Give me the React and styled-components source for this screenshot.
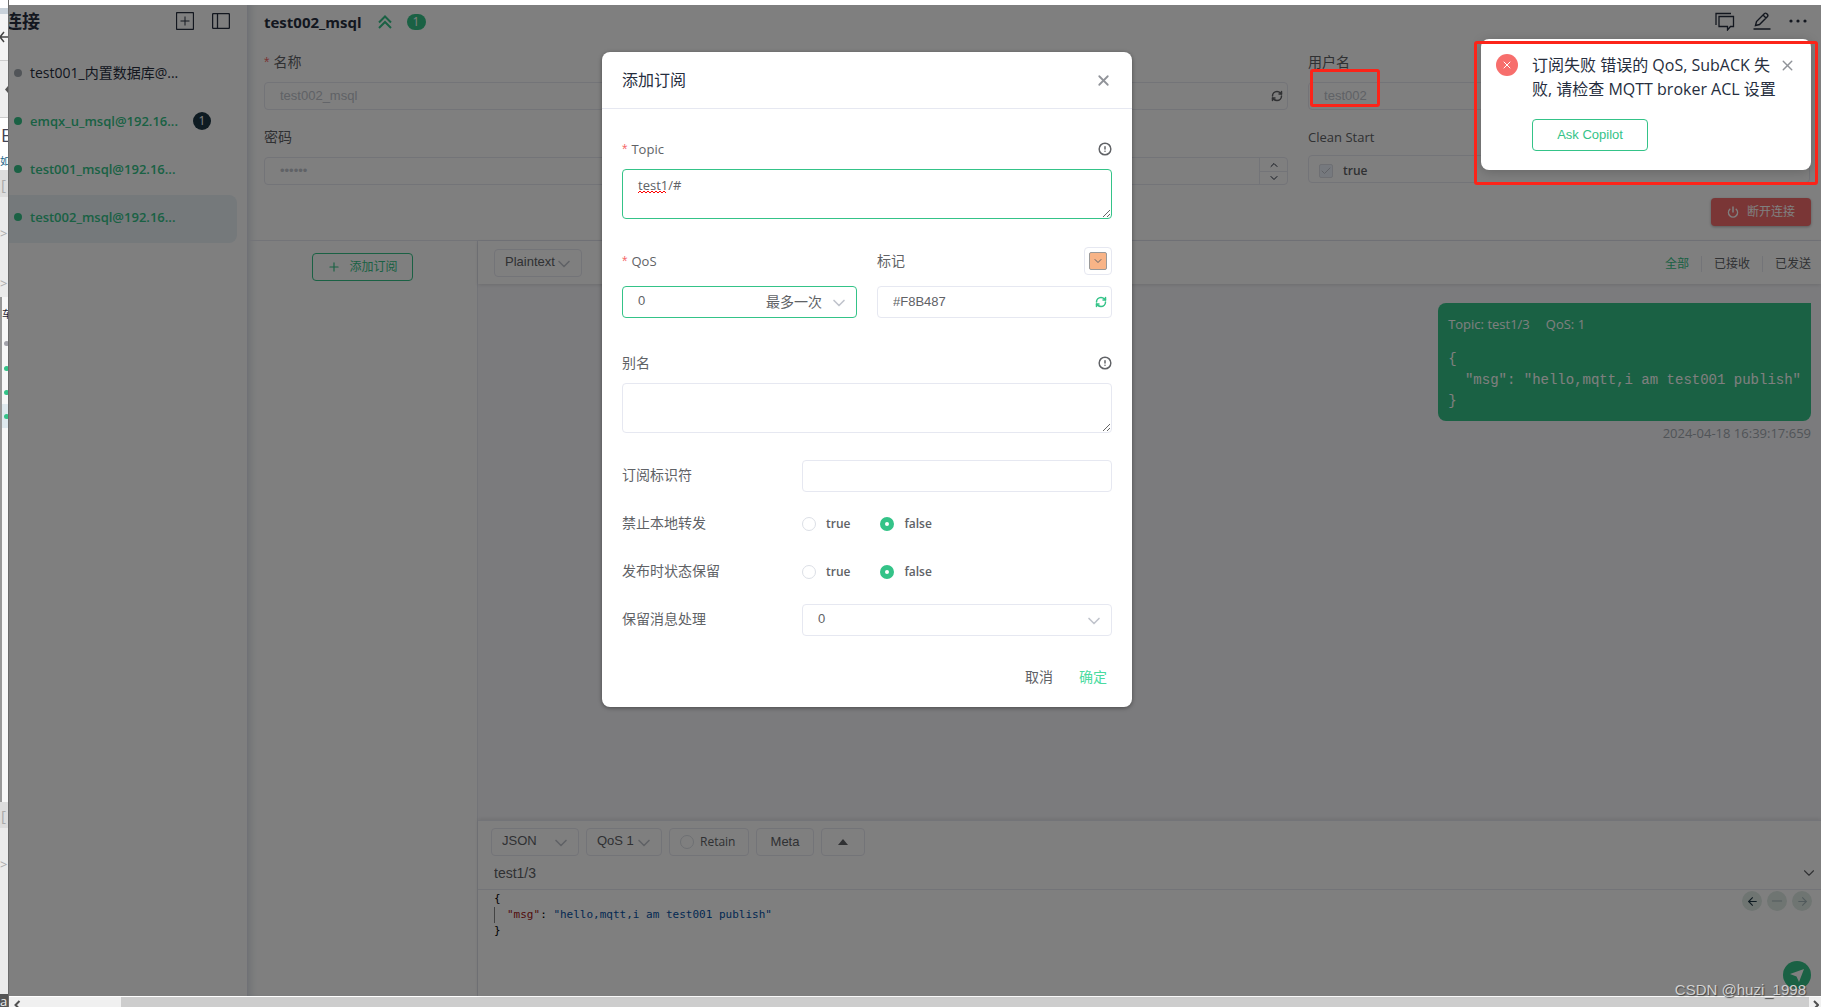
import styled, { createGlobalStyle, css } from "styled-components"
import {
  ArrowLeft,
  ArrowRight,
  Check,
  ChevronDown,
  ChevronUp,
  CircleAlert,
  Minus,
  Plus,
  Power,
  RefreshCw,
  X,
} from "lucide-react"

const green = "#34c388"
const red = "#f56c6c"
const line = "#e6e8f1"
const text = "#606266"
const title = "#262e3e"
const ui = `"Open Sans", "Noto Sans CJK SC", sans-serif`
const arial = `"Liberation Sans", "Noto Sans CJK SC", sans-serif`

const GlobalStyle = createGlobalStyle`
  *, *::before, *::after { box-sizing: border-box; }
  body {
    margin: 0;
    overflow: hidden;
    background: #fff;
    color: ${text};
    font: 13px/20px ${ui};
  }
  button, input, select, textarea {
    margin: 0;
    padding: 0;
    font: inherit;
    color: inherit;
    background: none;
    border: 0;
    outline: none;
  }
  svg { display: block; flex: none; }
`

const Screen = styled.div`
  display: flex;
  height: 100vh;
`

/* windows that peek out on the left */
const Strip = styled.div`
  flex: 0 0 9px;
  display: flex;
  flex-direction: column;
  overflow: hidden;
  border-right: 1px solid #6b6b6b;
  background: #ebebeb;
`

const Slice = styled.div`
  flex: ${p => (p.$h ? `0 0 ${p.$h}px` : "1 1 0")};
  display: flex;
  align-items: center;
  padding-left: ${p => p.$pad || 0}px;
  overflow: hidden;
  white-space: nowrap;
  background: ${p => p.$bg || "#ebebeb"};
  color: ${p => p.$color || "#aaa"};
  font-size: ${p => p.$size || 13}px;
  border-left: ${p => (p.$edge ? "2px solid #999" : 0)};
  border-bottom: ${p => (p.$rule ? "1px solid #ccc" : 0)};
`

const MiniDot = styled.i`
  flex: none;
  width: 5px;
  height: 5px;
  border-radius: 50%;
  background: ${p => p.$color || green};
`

const Desktop = styled.div`
  flex: 1;
  min-width: 0;
  display: flex;
  flex-direction: column;
  padding-top: 5px;
`

const Window = styled.div`
  position: relative;
  flex: 1;
  min-height: 0;
  display: flex;
  background: #fff;
`

const Mask = styled.div`
  position: absolute;
  inset: 0;
  z-index: 5;
  display: flex;
  align-items: flex-start;
  justify-content: center;
  padding: 47px 96px 0 0;
  background: rgba(0, 0, 0, 0.5);
`

const ScrollBar = styled.div`
  flex: 0 0 11px;
  display: flex;
  align-items: center;
  border-top: 1px solid #fff;
  background: #f0f0f0;
  color: #505050;
  overflow: hidden;
`

const ScrollArrow = styled.div`
  flex: none;
  padding: 6px 2px 0 4px;
`

const ScrollThumb = styled.div`
  flex: 1;
  height: 10px;
  margin-left: 98px;
  background: #cdcdcd;
`

/* sidebar */
const Sidebar = styled.aside`
  flex: 0 0 238px;
  display: flex;
  flex-direction: column;
  overflow: hidden;
`

const SideHead = styled.header`
  display: flex;
  align-items: center;
  gap: 18px;
  height: 46px;
  padding: 0 17px 14px 0;
  color: ${title};
`

const SideTitle = styled.h2`
  flex: 1;
  margin: 0 0 0 -5px;
  font: 700 18px/24px ${ui};
`

const IconButton = styled.button`
  display: flex;
  align-items: center;
  justify-content: center;
  color: ${p => p.$color || title};
`

const ConnList = styled.ul`
  margin: 0;
  padding: 0 10px 0 0;
  list-style: none;
`

const Conn = styled.li`
  display: flex;
  align-items: center;
  height: 48px;
  padding: 0 0 4px 5px;
  border-radius: 0 8px 8px 0;
  color: ${p => (p.$off ? title : green)};
  background: ${p => (p.$active ? "#eaf2f7" : "none")};
  font-weight: ${p => (p.$off ? 400 : 600)};
  font-size: ${p => (p.$off ? 14 : 13)}px;
`

const Dot = styled.i`
  flex: none;
  width: 8px;
  height: 8px;
  margin-right: 8px;
  border-radius: 50%;
  background: ${p => (p.$off ? "#a2a9b0" : green)};
`

const Count = styled.span`
  width: ${p => p.$w || 18}px;
  height: ${p => p.$h || 18}px;
  margin-left: 15px;
  border-radius: 9px;
  background: ${p => p.$bg};
  color: #fff;
  font: 400 12px/18px ${ui};
  line-height: ${p => p.$h || 18}px;
  text-align: center;
`

/* main */
const Main = styled.main`
  flex: 1;
  min-width: 0;
  display: flex;
  flex-direction: column;
  border-left: 1px solid #e0e2ec;
  box-shadow: inset 8px 0 8px -6px #d5dce3;
`

const TopBar = styled.header`
  display: flex;
  align-items: center;
  height: 34px;
  padding: 0 14px 0 16px;
`

const ConnTitle = styled.h1`
  margin: 0 16px 0 0;
  color: ${title};
  font: 700 15px/24px ${ui};
`

const Tools = styled.div`
  display: flex;
  align-items: center;
  gap: 18px;
  margin: 0 0 2px auto;
`

const ConnForm = styled.form`
  display: flex;
  flex-wrap: wrap;
  align-content: flex-start;
  padding: 8px 1px 0 6px;
  height: 159px;
`

const Col = styled.div`
  flex: 0 0 ${p => p.$w};
  height: 75px;
  padding: 0 10px;
`

const FieldLabel = styled.label`
  display: flex;
  align-items: center;
  gap: 4px;
  height: 30px;
  font-size: ${p => p.$size || 14}px;
  color: ${text};
`

const Star = styled.span`
  color: ${red};
  font: 14px/20px ${arial};
`

const Field = styled.div`
  position: relative;
  display: flex;
  align-items: center;
  height: ${p => p.$h || 28}px;
  margin-top: ${p => p.$mt || 0}px;
  padding: 0 ${p => p.$pr || 0}px 0 ${p => p.$pl || 15}px;
  border: 1px solid ${p => (p.$focus ? green : line)};
  border-radius: 4px;
  font-family: ${arial};

  input[type="text"], input[type="password"] {
    flex: 1;
    min-width: 0;
    color: ${p => (p.$muted ? "#c0c4cc" : text)};
  }
`

const Spinner = styled.div`
  align-self: stretch;
  display: grid;
  grid-template-rows: 1fr 1fr;
  width: 28px;
  border-left: 1px solid ${line};

  button + button { border-top: 1px solid ${line}; }
`

const CheckLine = styled.label`
  display: flex;
  align-items: center;
  gap: 10px;
  padding-top: 3px;
  font: 600 12px/20px ${ui};
  svg { grid-area: 1 / 1; }
`

const CheckBox = styled.span`
  display: grid;
  place-items: center;
  color: #c0c4cc;

  input {
    grid-area: 1 / 1;
    appearance: none;
    width: 14px;
    height: 14px;
    border: 1px solid #dcdfe6;
    border-radius: 2px;
    background: #edf2fc;
  }
`

const ActionRow = styled.div`
  display: flex;
  justify-content: flex-end;
  height: 43px;
  padding-right: 10px;
  border-bottom: 1px solid ${line};
`

const DisconnectButton = styled.button`
  display: flex;
  align-items: center;
  justify-content: center;
  gap: 8px;
  width: 100px;
  height: 28px;
  border-radius: 4px;
  background: ${red};
  color: #fff;
  font-size: 12px;
  box-shadow: 0 1px 3px rgba(0, 0, 0, 0.3);
`

const Body = styled.div`
  flex: 1;
  min-height: 0;
  display: flex;
`

const Subs = styled.section`
  flex: 0 0 230px;
  border-right: 1px solid ${line};
  padding-top: 12px;
`

const AddButton = styled.button`
  display: flex;
  align-items: center;
  justify-content: center;
  gap: 8px;
  width: 101px;
  height: 28px;
  margin: 0 auto;
  border: 1px solid ${green};
  border-radius: 4px;
  color: ${green};
  font-size: 12px;
`

const Chat = styled.section`
  flex: 1;
  min-width: 0;
  display: flex;
  flex-direction: column;
`

const ChatHead = styled.div`
  display: flex;
  align-items: center;
  justify-content: space-between;
  height: 43px;
  padding: 0 10px 0 16px;
  z-index: 1;
  box-shadow: 0 1px 4px rgba(0, 0, 0, 0.12);
`

const SelectWrap = styled.div`
  display: grid;
  align-items: center;
  width: ${p => p.$w || "100%"};
  height: ${p => p.$h || 28}px;
  margin-top: ${p => p.$mt || 0}px;
  border: 1px solid ${p => (p.$focus ? green : line)};
  border-radius: 4px;
  color: ${text};
  font-family: ${arial};

  select {
    grid-area: 1 / 1;
    appearance: none;
    height: 100%;
    padding: 0 0 2px ${p => p.$pl || 10}px;
  }
`

const SelectTail = styled.span`
  grid-area: 1 / 1;
  justify-self: end;
  display: flex;
  align-items: center;
  gap: 7px;
  padding-right: 7px;
  font-size: 14px;
  pointer-events: none;
  svg { margin-top: 2px; color: #c0c4cc; }
`

const Filters = styled.nav`
  display: flex;
  align-items: center;
  padding-top: 2px;
  font-size: 12px;
`

const FilterLink = styled.a`
  padding: 0 12px;
  border-left: ${p => (p.$first ? 0 : `1px solid ${line}`)};
  color: ${p => (p.$active ? green : text)};
  line-height: 16px;
  text-decoration: none;
  &:last-child { padding-right: 0; }
`

const Messages = styled.div`
  flex: 1;
  min-height: 0;
  display: flex;
  flex-direction: column;
  align-items: flex-end;
  padding: 19px 10px 0;
  background: #f7f7fb;
`

const Bubble = styled.article`
  padding: 11px 10px 9px;
  border-radius: 8px 0 8px 8px;
  background: ${green};
  color: #fff;
`

const BubbleMeta = styled.p`
  display: flex;
  gap: 16px;
  margin: 0 0 15px;
`

const Payload = styled.pre`
  margin: 0;
  font: 14px/21px "Liberation Mono", monospace;
`

const Time = styled.time`
  padding-top: 2px;
  color: #a2a9b0;
  font-size: 13px;
`

const Composer = styled.div`
  flex: 0 0 176px;
  border-top: 1px solid ${line};
  box-shadow: 0 -1px 4px rgba(0, 0, 0, 0.1);
  background: #fff;
`

const ComposerBar = styled.div`
  display: flex;
  gap: 7px;
  padding: 7px 13px 0;
`

const BarBox = styled.label`
  display: flex;
  align-items: center;
  gap: 6px;
  width: 80px;
  height: 28px;
  padding-left: 10px;
  border: 1px solid ${line};
  border-radius: 4px;
  font-size: 12px;
`

const BarButton = styled.button`
  display: flex;
  align-items: center;
  justify-content: center;
  width: ${p => p.$w}px;
  height: 28px;
  border: 1px solid ${line};
  border-radius: 4px;
  font: 13px/20px ${arial};
`

const TopicLine = styled.div`
  display: flex;
  align-items: center;
  height: 34px;
  padding: 0 3px 0 16px;
  border-bottom: 1px solid ${line};

  input {
    flex: 1;
    font: 14px/20px ${arial};
  }
`

const EditorArea = styled.div`
  display: flex;
  justify-content: space-between;
  padding: 1px 9px 0 16px;
`

const Code = styled.pre`
  margin: 0;
  color: #000;
  font: 11px/16px "DejaVu Sans Mono", monospace;
`

const CodeIndent = styled.span`
  display: inline-block;
  width: 13px;
  height: 16px;
  border-left: 1px solid #888;
  vertical-align: top;
`

const Key = styled.span`
  color: #a31515;
`

const Str = styled.span`
  color: #0451a5;
`

const History = styled.div`
  display: flex;
  align-items: flex-start;
  gap: 5px;
`

const RoundButton = styled.button`
  display: grid;
  place-items: center;
  width: ${p => p.$size || 20}px;
  height: ${p => p.$size || 20}px;
  border-radius: 50%;
  background: ${p => (p.$primary ? green : "#dfeae5")};
  color: ${p => (p.$primary ? "#fff" : p.$off ? "#a2b5b8" : "#1d3644")};
`

const SendRow = styled.div`
  display: flex;
  justify-content: flex-end;
  padding: 22px 10px 0;
`

/* subscribe dialog */
const Dialog = styled.section`
  width: 530px;
  border-radius: 8px;
  background: #fff;
  box-shadow: 0 1px 4px rgba(0, 0, 0, 0.4);
`

const DialogHead = styled.header`
  display: flex;
  align-items: center;
  justify-content: space-between;
  height: 57px;
  padding: 0 20px;
  border-bottom: 1px solid ${line};

  h3 {
    margin: 0;
    color: ${title};
    font: 400 16px/24px ${ui};
  }
`

const DialogBody = styled.form`
  padding: 20px 20px 0;
`

const LabelRow = styled.div`
  display: flex;
  align-items: center;
  justify-content: space-between;
  height: 40px;
`

const AreaWrap = styled.div`
  position: relative;
  height: 50px;
  margin-bottom: ${p => p.$mb}px;

  textarea {
    display: block;
    width: 100%;
    height: 50px;
    padding: 5px 15px;
    border: 1px solid ${p => (p.$focus ? green : line)};
    border-radius: 4px;
    resize: vertical;
  }
`

const Squiggle = styled.svg`
  position: absolute;
  left: 16px;
  top: 21px;
`

const TwoCols = styled.div`
  display: grid;
  grid-template-columns: 1fr 1fr;
  column-gap: 20px;
  margin-bottom: 25px;
`

const ColorButton = styled.button`
  display: grid;
  place-items: center;
  width: 28px;
  height: 28px;
  border: 1px solid ${line};
  border-radius: 4px;

  span {
    display: grid;
    place-items: center;
    width: 18px;
    height: 18px;
    border: 1px solid #999;
    border-radius: 2px;
    background: #f8b487;
  }
`

const InlineRow = styled.div`
  display: flex;
  align-items: center;
  height: 48px;
  > :first-child { flex: 0 0 180px; }
  > :last-child { flex: 1; }
`

const Name = styled.label`
  padding-bottom: 3px;
  font-size: 14px;
`

const Radios = styled.div`
  display: flex;
  gap: 30px;
`

const RadioLabel = styled.label`
  display: flex;
  align-items: center;
  gap: 10px;
  font-weight: 600;
  font-size: 12px;
`

const radioOn = css`
  border: 5px solid ${green};
`

const RadioInput = styled.input`
  appearance: none;
  width: 14px;
  height: 14px;
  border: 1px solid #dcdfe6;
  border-radius: 50%;
  &:checked { ${radioOn} }
`

const DialogFoot = styled.footer`
  display: flex;
  justify-content: flex-end;
  gap: 26px;
  padding: 23px 25px 20px;
  font-size: 14px;
`

const TextButton = styled.button`
  height: 20px;
  color: ${p => (p.$primary ? "#4adba0" : text)};
`

/* notification */
const Notice = styled.div`
  position: absolute;
  z-index: 6;
  top: 34px;
  right: 10px;
  display: flex;
  width: 330px;
  padding: 14px 12px 19px 14px;
  border-radius: 8px;
  background: #fff;
  box-shadow: 0 2px 12px rgba(0, 0, 0, 0.2);
`

const ErrorIcon = styled.span`
  flex: none;
  display: grid;
  place-items: center;
  width: 22px;
  height: 22px;
  margin: 1px 14px 0 1px;
  border-radius: 50%;
  background: #f76e6c;
  color: #fff;
`

const NoticeText = styled.p`
  width: 247px;
  margin: 0 0 18px;
  color: ${title};
  font: 16px/24px ${ui};
  white-space: nowrap;
`

const CopilotButton = styled.button`
  width: 116px;
  height: 32px;
  border: 1px solid ${green};
  border-radius: 4px;
  color: ${green};
  font: 13px/20px ${arial};
`

const NoticeClose = styled(IconButton)`
  align-self: flex-start;
  margin-top: 4px;
`

const MarkBox = styled.div`
  position: absolute;
  z-index: 7;
  inset: 2px -7px -15px -7px;
  border: 3px solid #fc2419;
  border-radius: 3px;
  pointer-events: none;
`

/* keeps to the second form column at any width */
const UserMark = styled.div`
  position: absolute;
  inset: 0;
  z-index: 7;
  display: flex;
  padding: 64px 1px 0 249px;
  pointer-events: none;

  &::before { content: ""; flex: 0 0 66.67%; }
  &::after {
    content: "";
    width: 70px;
    height: 38px;
    margin-left: 11px;
    border: 3px solid #fc2419;
    border-radius: 3px;
  }
`

const Watermark = styled.div`
  position: absolute;
  z-index: 8;
  right: 15px;
  bottom: -4px;
  color: #d0d0d0;
  font: 15px/20px ${arial};
  text-shadow: 1px 1px 1px #444;
`

const connections = [
  { name: "test001_内置数据库@...", off: true },
  { name: "emqx_u_msql@192.16...", count: 1 },
  { name: "test001_msql@192.16..." },
  { name: "test002_msql@192.16...", active: true },
]

function LeftStrip() {
  return (
    <Strip aria-hidden="true">
      <Slice $h={8} $bg="#fff" />
      <Slice $h={6} $bg="#c9d2da" />
      <Slice $h={47} $bg="#f4f4f4" $color="#444" $rule>
        <svg width="9" height="12" viewBox="0 0 9 12" fill="none" stroke="currentColor" strokeWidth="1.5"><path d="M4 1L0 6l4 5M0 6h9" /></svg>
      </Slice>
      <Slice $h={57} $bg="#eee" $color="#555" $pad={5} $rule>
        <svg width="3" height="7" viewBox="0 0 3 7" fill="currentColor"><path d="M3 0v7L0 3.500z" /></svg>
      </Slice>
      <Slice $h={34} $bg="#fff" $color="#445" $pad={1} $size={18}>E</Slice>
      <Slice $h={18} $bg="#fff" $color="#268" $size={10}>如</Slice>
      <Slice $h={27} $bg="#ddd" $pad={1} $size={15}>[</Slice>
      <Slice $h={72}>&gt;</Slice>
      <Slice $h={28}>&gt;</Slice>
      <Slice $h={34} $bg="#f8f8f8" $color="#223" $size={10} $edge>车</Slice>
      <Slice $h={25} $bg="#f8f8f8" $pad={2} $edge><MiniDot $color="#a2a2aa" /></Slice>
      <Slice $h={24} $bg="#f8f8f8" $pad={2} $edge><MiniDot /></Slice>
      <Slice $h={24} $bg="#f8f8f8" $pad={2} $edge><MiniDot /></Slice>
      <Slice $h={24} $bg="#dfe9ee" $pad={2} $edge><MiniDot /></Slice>
      <Slice $bg="#f8f8f8" $edge />
      <Slice $h={26} $bg="#ddd" $pad={1} $size={15}>[</Slice>
      <Slice $h={72}>&gt;</Slice>
      <Slice $h={94} />
      <Slice $h={13} $bg="#555" $color="#eee">a</Slice>
    </Strip>
  )
}

function YesNo({ id, label }) {
  return (
    <InlineRow role="radiogroup" aria-labelledby={id}>
      <Name as="span" id={id}>{label}</Name>
      <Radios>
        <RadioLabel><RadioInput type="radio" name={id} value="true" />true</RadioLabel>
        <RadioLabel><RadioInput type="radio" name={id} value="false" defaultChecked />false</RadioLabel>
      </Radios>
    </InlineRow>
  )
}

function RefreshIcon({ color }) {
  return <RefreshCw size={12} strokeWidth={3} color={color} />
}

function SubscribeDialog() {
  return (
    <Dialog role="dialog" aria-labelledby="dialog-title">
      <DialogHead>
        <h3 id="dialog-title">添加订阅</h3>
        <IconButton $color="#909399" aria-label="close"><X size={17} strokeWidth={2.5} /></IconButton>
      </DialogHead>
      <DialogBody>
        <LabelRow>
          <FieldLabel htmlFor="topic" $size={13}><Star>*</Star>Topic</FieldLabel>
          <CircleAlert size={14} strokeWidth={2.5} />
        </LabelRow>
        <AreaWrap $focus $mb={22}>
          <textarea id="topic" defaultValue="test1/#" spellCheck={false} />
          <Squiggle width="28" height="4" viewBox="0 0 28 4" fill="none" stroke="#f00">
            <path d="M0 3l2-2 2 2 2-2 2 2 2-2 2 2 2-2 2 2 2-2 2 2 2-2 2 2 2-2 2 2" />
          </Squiggle>
        </AreaWrap>
        <TwoCols>
          <div>
            <LabelRow>
              <FieldLabel htmlFor="qos" $size={13}><Star>*</Star>QoS</FieldLabel>
            </LabelRow>
            <SelectWrap $h={32} $mt={5} $pl={15} $focus>
              <select id="qos" defaultValue="0"><option>0</option><option>1</option><option>2</option></select>
              <SelectTail>最多一次<ChevronDown size={20} /></SelectTail>
            </SelectWrap>
          </div>
          <div>
            <LabelRow>
              <FieldLabel htmlFor="color">标记</FieldLabel>
              <ColorButton type="button" aria-label="color"><span><ChevronDown size={12} /></span></ColorButton>
            </LabelRow>
            <Field $h={32} $mt={5} $pr={4}>
              <input type="text" id="color" defaultValue="#F8B487" />
              <RefreshIcon color={green} />
            </Field>
          </div>
        </TwoCols>
        <LabelRow>
          <FieldLabel htmlFor="alias">别名</FieldLabel>
          <CircleAlert size={14} strokeWidth={2.5} />
        </LabelRow>
        <AreaWrap $mb={19}>
          <textarea id="alias" />
        </AreaWrap>
        <InlineRow>
          <Name htmlFor="sub-id">订阅标识符</Name>
          <Field $h={32}><input type="text" id="sub-id" /></Field>
        </InlineRow>
        <YesNo id="no-local" label="禁止本地转发" />
        <YesNo id="retain-as-published" label="发布时状态保留" />
        <InlineRow>
          <Name htmlFor="retain-handling">保留消息处理</Name>
          <SelectWrap $h={32} $pl={15}>
            <select id="retain-handling" defaultValue="0"><option>0</option><option>1</option><option>2</option></select>
            <SelectTail><ChevronDown size={20} /></SelectTail>
          </SelectWrap>
        </InlineRow>
      </DialogBody>
      <DialogFoot>
        <TextButton>取消</TextButton>
        <TextButton $primary>确定</TextButton>
      </DialogFoot>
    </Dialog>
  )
}

function App() {
  return (
    <Screen>
      <GlobalStyle />
      <LeftStrip />
      <Desktop>
        <Window>
          <Sidebar>
            <SideHead>
              <SideTitle>连接</SideTitle>
              <IconButton aria-label="new connection">
                <svg width="18" height="18" viewBox="0 0 18 18" fill="none" stroke="currentColor">
                  <rect x="0.5" y="0.5" width="17" height="17" rx="1" strokeWidth="1.3" />
                  <path d="M9 4.5v9M4.5 9h9" />
                </svg>
              </IconButton>
              <IconButton aria-label="toggle list">
                <svg width="18" height="16" viewBox="0 0 18 16" fill="none" stroke="currentColor" strokeWidth="1.3">
                  <rect x="0.6" y="0.6" width="16.8" height="14.8" rx="1" />
                  <path d="M5.5 1v14" />
                </svg>
              </IconButton>
            </SideHead>
            <ConnList>
              {connections.map(c => (
                <Conn key={c.name} $off={c.off} $active={c.active}>
                  <Dot $off={c.off} />
                  {c.name}
                  {c.count && <Count $bg="#1d3644">{c.count}</Count>}
                </Conn>
              ))}
            </ConnList>
          </Sidebar>
          <Main>
            <TopBar>
              <ConnTitle>test002_msql</ConnTitle>
              <IconButton $color={green} aria-label="collapse">
                <svg width="14" height="14" viewBox="0 0 14 14" fill="none" stroke="currentColor" strokeWidth="2">
                  <path d="M1 7.500l6-6 6 6M1 13l6-6 6 6" />
                </svg>
              </IconButton>
              <Count $bg={green} $w={19} $h={16}>1</Count>
              <Tools>
                <IconButton aria-label="chat">
                  <svg width="20" height="19" viewBox="0 0 20 19" fill="none" stroke="currentColor" strokeWidth="1.3">
                    <path d="M1 13V1.5h15M4 4.5h14.5v10h-3L12.500 18v-3.500H4z" />
                  </svg>
                </IconButton>
                <IconButton aria-label="edit">
                  <svg width="18" height="18" viewBox="0 0 18 18" fill="none" stroke="currentColor" strokeWidth="1.4">
                    <path d="M2.500 13.500l1-4L11.500 1.500q1-.8 2 0l1 1q.8 1 0 2L6.500 12.500zM10 3l3 3M.5 17h17" />
                  </svg>
                </IconButton>
                <IconButton aria-label="more">
                  <svg width="18" height="4" viewBox="0 0 18 4" fill="currentColor">
                    <circle cx="2" cy="2" r="1.600" /><circle cx="9" cy="2" r="1.600" /><circle cx="16" cy="2" r="1.600" />
                  </svg>
                </IconButton>
              </Tools>
            </TopBar>
            <ConnForm>
              <Col $w="66.67%">
                <FieldLabel htmlFor="name"><Star>*</Star>名称</FieldLabel>
                <Field $muted $pr={4} $mt={5}>
                  <input type="text" id="name" disabled value="test002_msql" />
                  <RefreshIcon />
                </Field>
              </Col>
              <Col $w="33.33%">
                <FieldLabel htmlFor="user">用户名</FieldLabel>
                <Field $muted $mt={5}><input type="text" id="user" disabled value="test002" /></Field>
              </Col>
              <Col $w="66.67%">
                <FieldLabel htmlFor="password">密码</FieldLabel>
                <Field $muted $mt={5}>
                  <input type="password" id="password" disabled value="public" />
                  <Spinner>
                    <IconButton type="button" aria-label="increase"><ChevronUp size={12} /></IconButton>
                    <IconButton type="button" aria-label="decrease"><ChevronDown size={12} /></IconButton>
                  </Spinner>
                </Field>
              </Col>
              <Col $w="33.33%">
                <FieldLabel as="div" $size={13}>Clean Start</FieldLabel>
                <Field $pl={10} $mt={3}>
                  <CheckLine>
                    <CheckBox><input type="checkbox" defaultChecked disabled /><Check size={12} /></CheckBox>
                    true
                  </CheckLine>
                </Field>
              </Col>
            </ConnForm>
            <ActionRow>
              <DisconnectButton><Power size={12} strokeWidth={3} />断开连接</DisconnectButton>
            </ActionRow>
            <Body>
              <Subs>
                <AddButton><Plus size={14} />添加订阅</AddButton>
              </Subs>
              <Chat>
                <ChatHead>
                  <SelectWrap $w="88px">
                    <select aria-label="format"><option>Plaintext</option></select>
                    <SelectTail><ChevronDown size={20} /></SelectTail>
                  </SelectWrap>
                  <Filters>
                    <FilterLink href="#all" $active $first>全部</FilterLink>
                    <FilterLink href="#received">已接收</FilterLink>
                    <FilterLink href="#published">已发送</FilterLink>
                  </Filters>
                </ChatHead>
                <Messages>
                  <Bubble>
                    <BubbleMeta><span>Topic: test1/3</span><span>QoS: 1</span></BubbleMeta>
                    <Payload>{'{\n  "msg": "hello,mqtt,i am test001 publish"\n}'}</Payload>
                  </Bubble>
                  <Time>2024-04-18 16:39:17:659</Time>
                </Messages>
                <Composer>
                  <ComposerBar>
                    <SelectWrap $w="88px">
                      <select aria-label="payload type"><option>JSON</option></select>
                      <SelectTail><ChevronDown size={20} /></SelectTail>
                    </SelectWrap>
                    <SelectWrap $w="76px">
                      <select aria-label="publish QoS"><option>QoS 1</option></select>
                      <SelectTail><ChevronDown size={20} /></SelectTail>
                    </SelectWrap>
                    <BarBox><RadioInput type="radio" name="retain" />Retain</BarBox>
                    <BarButton $w={58}>Meta</BarButton>
                    <BarButton $w={44} aria-label="expand">
                      <svg width="10" height="6" viewBox="0 0 10 6" fill="currentColor"><path d="M5 0l5 6H0z" /></svg>
                    </BarButton>
                  </ComposerBar>
                  <TopicLine>
                    <input aria-label="publish topic" defaultValue="test1/3" />
                    <ChevronDown size={18} strokeWidth={1.500} />
                  </TopicLine>
                  <EditorArea>
                    <Code>
                      {"{\n"}
                      <CodeIndent /><Key>"msg"</Key>: <Str>"hello,mqtt,i am test001 publish"</Str>
                      {"\n}"}
                    </Code>
                    <History>
                      <RoundButton aria-label="previous"><ArrowLeft size={13} /></RoundButton>
                      <RoundButton $off aria-label="clear"><Minus size={16} strokeWidth={1.500} /></RoundButton>
                      <RoundButton $off aria-label="next"><ArrowRight size={13} /></RoundButton>
                    </History>
                  </EditorArea>
                  <SendRow>
                    <RoundButton $primary $size={28} aria-label="send">
                      <svg width="14" height="13" viewBox="0 0 14 13" fill="currentColor">
                        <path d="M14 0L9 13 6.500 7.500 0 5z" />
                      </svg>
                    </RoundButton>
                  </SendRow>
                </Composer>
              </Chat>
            </Body>
          </Main>
          <Mask><SubscribeDialog /></Mask>
          <Notice role="alert">
            <MarkBox />
            <ErrorIcon><X size={12} strokeWidth={2} /></ErrorIcon>
            <div>
              <NoticeText>订阅失败 错误的 QoS, SubACK 失<br />败, 请检查 MQTT broker ACL 设置</NoticeText>
              <CopilotButton>Ask Copilot</CopilotButton>
            </div>
            <NoticeClose $color="#909399" aria-label="close notice"><X size={17} /></NoticeClose>
          </Notice>
          <UserMark />
          <Watermark>CSDN @huzi_1998</Watermark>
        </Window>
        <ScrollBar aria-hidden="true">
          <ScrollArrow><svg width="8" height="10" viewBox="0 0 8 10" fill="none" stroke="currentColor" strokeWidth="2"><path d="M6.500 1l-4 4 4 4" /></svg></ScrollArrow>
          <ScrollThumb />
          <ScrollArrow><svg width="6" height="10" viewBox="0 0 6 10" fill="none" stroke="currentColor" strokeWidth="2"><path d="M1 1l4 4-4 4" /></svg></ScrollArrow>
        </ScrollBar>
      </Desktop>
    </Screen>
  )
}

export default App
